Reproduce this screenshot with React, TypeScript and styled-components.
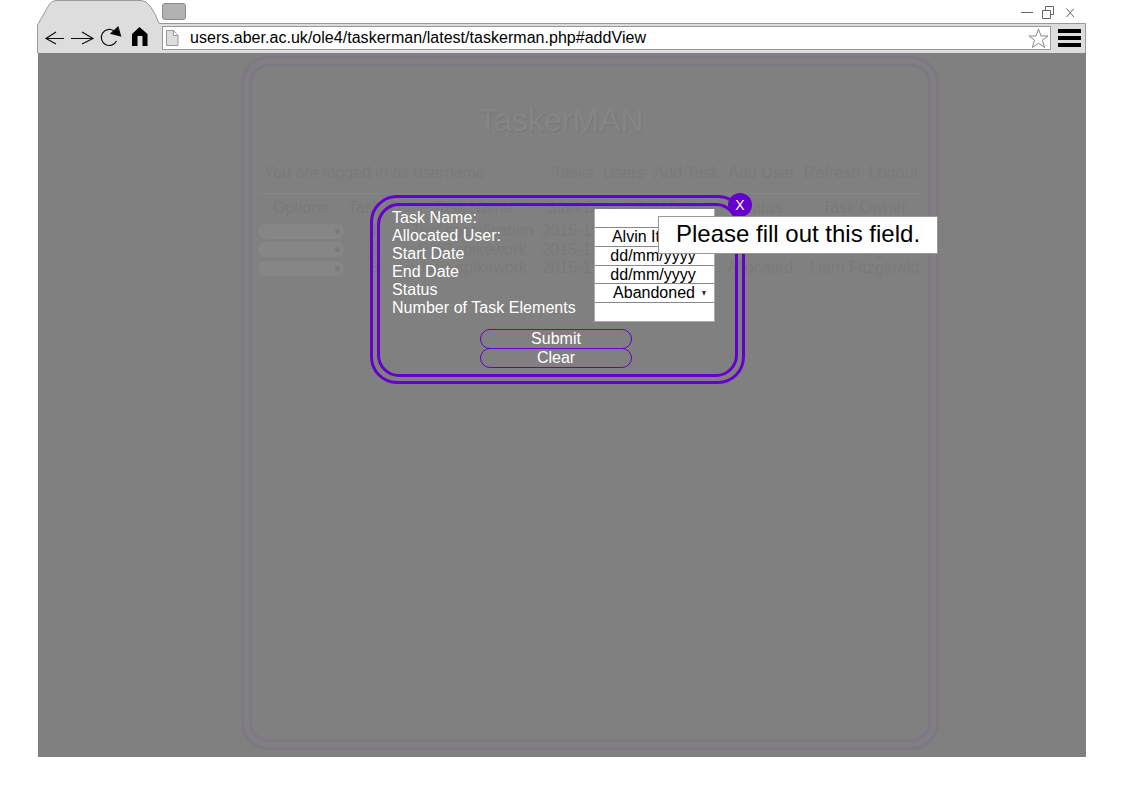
import React from "react";
import styled, { createGlobalStyle } from "styled-components";

const PURPLE = "#6600cc";

const GlobalStyle = createGlobalStyle`
  body { margin: 0; background: #fff; font-family: "Liberation Sans", Arial, sans-serif; font-size: 16px; color: #000; }
  * { box-sizing: border-box; }
  button, input { font: inherit; }
`;

const Browser = styled.div`
  width: 1049px;
  height: 757px;
  margin-left: 37px;
  display: flex;
  flex-direction: column;
`;

const Chrome = styled.header`
  position: relative;
  height: 53px;
  display: flex;
  flex-direction: column;
`;

const ChromeShape = styled.svg`
  position: absolute;
  inset: 0;
`;

const TabStrip = styled.div`
  position: relative;
  height: 24px;
  display: flex;
  justify-content: space-between;
  padding: 3px 12px 0 125px;
`;

const NewTab = styled.div`
  width: 24px;
  height: 17px;
  border: 1px solid #8c8c8c;
  border-radius: 3px;
  background: #b1b1b1;
`;

const Toolbar = styled.div`
  position: relative;
  flex: 1;
  display: flex;
  align-items: flex-start;
`;

const NavIcons = styled.svg`
  width: 125px;
  height: 29px;
`;

const AddressBar = styled.div`
  width: 889px;
  height: 24px;
  margin-top: 2px;
  border: 1px solid #999;
  background: #fff;
  display: flex;
  align-items: center;
  padding: 0 1px 0 2px;
`;

const Url = styled.span`
  flex: 1;
  margin-left: 11px;
  line-height: 22px;
  letter-spacing: 0.03px;
  white-space: nowrap;
`;

const MenuIcon = styled.svg`
  margin: 3px 0 0 6px;
`;

const Viewport = styled.main`
  position: relative;
  flex: 1;
  margin-left: 1px;
  background: #808080;
  padding: 3px 0 0 203px;
`;

const Backdrop = styled.section`
  width: 698px;
  height: 694px;
  border: 3px solid #7d7982;
  border-radius: 27px;
  padding: 5px;
  background: #817e84;
`;

const BackdropInner = styled.div`
  height: 100%;
  border: 3px solid #7d7982;
  border-radius: 20px;
  background: #808080;
  padding: 33px 5px 0;
  color: #7a7a7a;
`;

const Title = styled.h1`
  margin: 0;
  padding-right: 58px;
  font-size: 32px;
  line-height: 40px;
  font-weight: 400;
  text-align: center;
  color: #858585;
  text-shadow: 1px 1px 1px #777;
`;

const AccountRow = styled.div`
  display: flex;
  justify-content: space-between;
  margin-top: 20px;
  height: 34px;
  padding: 0 5px 0 7px;
  line-height: 26px;
  border-bottom: 1px solid #868686;
  white-space: nowrap;
`;

const Nav = styled.nav`
  display: flex;
  gap: 9px;
`;

const TaskGrid = styled.div`
  display: grid;
  grid-template-columns: 87px 61px 135px 84px 90px 92px 117px;
  grid-template-rows: 28px repeat(3, 18.5px);
  align-items: center;
  justify-items: center;
  white-space: nowrap;
`;

const OptionPill = styled.span`
  width: 86px;
  height: 15px;
  margin-left: 1px;
  border-radius: 8px;
  background: #868686;
  display: flex;
  align-items: center;
  justify-content: flex-end;
  padding-right: 4px;
  &::after { content: ""; width: 5px; height: 5px; border-radius: 3px; background: #7a7a7a; }
`;

const Dialog = styled.section`
  position: absolute;
  left: 332px;
  top: 142px;
  width: 375px;
  height: 189px;
  border: 3px solid ${PURPLE};
  border-radius: 27px;
  padding: 5px 4px 4px;
`;

const DialogInner = styled.form`
  height: 100%;
  border: 3px solid ${PURPLE};
  border-radius: 22px;
  padding: 3px 20px 0 12px;
  color: #fff;
`;

const FormBody = styled.div`
  display: flex;
  justify-content: space-between;
`;

const Labels = styled.div`
  display: flex;
  flex-direction: column;
`;

const Label = styled.label`
  height: 18px;
  line-height: 18px;
  letter-spacing: 0.04px;
  white-space: nowrap;
`;

const Fields = styled.div`
  width: 121px;
  height: 113px;
  display: grid;
  grid-template-rows: 18px 19px 19px 18px 19px 20px;
  border: solid #aaa;
  border-width: 0 1px 1px;
  background: #fff;
  color: #000;
`;

const Field = styled.div<{ $shift?: number }>`
  display: flex;
  align-items: flex-start;
  justify-content: center;
  padding-left: ${(p) => Math.max(p.$shift ?? 0, 0)}px;
  padding-right: ${(p) => Math.max(-(p.$shift ?? 0), 0)}px;
  line-height: 18px;
  white-space: nowrap;
  overflow: hidden;
  & + & { border-top: 1px solid #888; }
`;

const Caret = styled.span`
  margin: 7px 0 0 7px;
  border: 2.5px solid transparent;
  border-top: 5px solid #333;
  border-bottom: 0;
`;

const Actions = styled.div`
  width: 152px;
  margin: 7px 0 0 88px;
  display: flex;
  flex-direction: column;
`;

const Action = styled.button`
  height: 20px;
  padding: 0 0 1px;
  border: 1px solid ${PURPLE};
  border-radius: 10px;
  background: transparent;
  color: #fff;
  line-height: 17px;
  & + & { margin-top: -1px; }
`;

const Close = styled.button`
  position: absolute;
  left: 690px;
  top: 140px;
  width: 24px;
  height: 24px;
  padding: 0;
  border: 0;
  border-radius: 50%;
  background: ${PURPLE};
  color: #fff;
  font-size: 14px;
`;

const Tooltip = styled.div`
  position: absolute;
  left: 620px;
  top: 163px;
  width: 280px;
  height: 38px;
  border: 1px solid #999;
  background: #fff;
  font-size: 24px;
  line-height: 33px;
  text-align: center;
  white-space: nowrap;
`;

const labels = ["Task Name:", "Allocated User:", "Start Date", "End Date", "Status", "Number of Task Elements"];
const navItems = ["Tasks", "Users", "Add Task", "Add User", "Refresh", "Logout"];
const headers = ["Options", "Task ID", "Task Name", "Start Date", "End Date", "Status", "Task Owner"];
const tasks = [
  ["1", "Test specification", "2015-11-01", "2015-11-08", "Allocated", "Liam Fitzgerald"],
  ["2", "PHP spikework", "2015-11-01", "2015-11-08", "Allocated", "Liam Fitzgerald"],
  ["3", "Java spikework", "2015-11-01", "2015-11-08", "Allocated", "Liam Fitzgerald"],
];

export default function App() {
  return (
    <>
      <GlobalStyle />
      <Browser>
        <Chrome>
          <ChromeShape width="1049" height="53">
            <path d="M.5 54V25L12 5Q14.500 .5 20 .5H104Q109 .5 113 6Q119 14 122 23.500H1048.500V54" fill="#ddd" stroke="#999" />
          </ChromeShape>
          <TabStrip>
            <NewTab />
            <svg width="56" height="18" fill="none" stroke="#666">
              <path d="M3 9.500H15M24.500 7.500H32.500V15.500H24.500ZM27.500 7V3.500H35.500V11.500H33M48.500 5.500L56 14M56 5.500L48.500 14" />
            </svg>
          </TabStrip>
          <Toolbar>
            <NavIcons fill="none" stroke="#111" strokeWidth="1.2">
              <path d="M27 14.500H9M19 8L9 14.500L19 20M34 14.500H56M45 8L56 14.500L45 20" />
              <path d="M77 7A8 8 0 1 0 79.500 17" />
              <path d="M81 3L83.500 12L74 9.500Z" fill="#000" />
              <path d="M95 22V10L102.500 3L110.500 10V22H105.500V12H100.500V22Z" fill="#000" stroke="none" />
            </NavIcons>
            <AddressBar>
              <svg width="14" height="18" fill="#ddd" stroke="#999">
                <path d="M1.500 1.500H8.500L13 6.500V16.500H1.500ZM8.500 1.500V6.500H13" />
              </svg>
              <Url>users.aber.ac.uk/ole4/taskerman/latest/taskerman.php#addView</Url>
              <svg width="21" height="21" fill="#fff" stroke="#888">
                <path d="M10.500 1L13 8H20L14.300 12.200L16.700 19.500L10.500 15.200L4.300 19.500L6.500 12.200L1 8H8Z" />
              </svg>
            </AddressBar>
            <MenuIcon width="24" height="22">
              <path d="M1 4H24M1 11H24M1 18H24" stroke="#000" strokeWidth="4" />
            </MenuIcon>
          </Toolbar>
        </Chrome>
        <Viewport>
          <Backdrop>
            <BackdropInner>
              <Title>TaskerMAN</Title>
              <AccountRow>
                <span>You are logged in as username</span>
                <Nav>{navItems.map((n) => <span key={n}>{n}</span>)}</Nav>
              </AccountRow>
              <TaskGrid>
                {headers.map((h) => <span key={h}>{h}</span>)}
                {tasks.map((row, i) => (
                  <React.Fragment key={i}>
                    <OptionPill />
                    {row.map((cell, j) => <span key={j}>{cell}</span>)}
                  </React.Fragment>
                ))}
              </TaskGrid>
            </BackdropInner>
          </Backdrop>
          <Dialog>
            <DialogInner>
              <FormBody>
                <Labels>{labels.map((l) => <Label key={l}>{l}</Label>)}</Labels>
                <Fields>
                  <Field />
                  <Field $shift={-6}>Alvin Itdept</Field>
                  <Field $shift={-3}>dd/mm/yyyy</Field>
                  <Field $shift={-3}>dd/mm/yyyy</Field>
                  <Field $shift={10}>Abandoned<Caret /></Field>
                  <Field />
                </Fields>
              </FormBody>
              <Actions>
                <Action type="button">Submit</Action>
                <Action type="button">Clear</Action>
              </Actions>
            </DialogInner>
          </Dialog>
          <Close>X</Close>
          <Tooltip>Please fill out this field.</Tooltip>
        </Viewport>
      </Browser>
    </>
  );
}
